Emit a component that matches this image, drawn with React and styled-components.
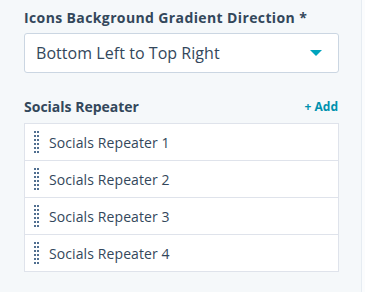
import React from 'react';
import styled, { createGlobalStyle } from 'styled-components';

const Global = createGlobalStyle`
  body {
    margin: 0;
    background: #fbfcfd;
    font-family: "Open Sans", "Noto Sans", sans-serif;
    color: #33475b;
  }
`;

const Panel = styled.div`
  height: 292px;
  padding: 8px 0 0 24px;
  box-sizing: border-box;
  width: 362px;
  background: #f5f8fa;
  border-right: 1px solid #e6ecf2;
`;

const Field = styled.div`
  width: 315px;
  display: flex;
  flex-direction: column;
`;

const Label = styled.div`
  font-size: 14px;
  line-height: 20px;
  font-weight: 700;
  letter-spacing: 0.38px;
  margin-bottom: 5px;
`;

const Select = styled.div`
  height: 40px;
  box-sizing: border-box;
  border: 1px solid #cbd6e2;
  border-radius: 3px;
  background: #fff;
  display: flex;
  align-items: center;
  justify-content: space-between;
  padding: 0 16px 0 11px;
  font-size: 16px;
  letter-spacing: 0.05px;
`;

const Caret = styled.span`
  width: 0;
  height: 0;
  border-left: 6px solid transparent;
  border-right: 6px solid transparent;
  border-top: 6px solid #00a4bd;
`;

const Header = styled.div`
  display: flex;
  justify-content: space-between;
  align-items: center;
  margin-top: 24px;
  margin-bottom: 6px;
  line-height: 20px;
`;

const Title = styled.span`
  font-size: 14px;
  font-weight: 700;
`;

const AddLink = styled.a`
  font-size: 12px;
  font-weight: 700;
  color: #0091ae;
  text-decoration: none;
  margin-right: 1px;
`;

const List = styled.div`
  border: 1px solid #dfe3eb;
  background: #fff;
`;

const Row = styled.div`
  height: 36px;
  display: flex;
  align-items: center;
  padding-left: 9px;
  font-size: 14px;
  letter-spacing: 0.1px;
  border-top: ${p => (p.first ? 'none' : '1px solid #dfe3eb')};
`;

const Handle = styled.span`
  display: grid;
  grid-template-columns: 2px 2px;
  grid-auto-rows: 2px;
  column-gap: 1px;
  row-gap: 2px;
  margin-right: 10px;
  & > i {
    background: #516f90;
  }
`;

const items = ['Socials Repeater 1', 'Socials Repeater 2', 'Socials Repeater 3', 'Socials Repeater 4'];

export default function App() {
  return (
    <>
      <Global />
      <Panel>
        <Field>
          <Label>Icons Background Gradient Direction *</Label>
          <Select>
            Bottom Left to Top Right
            <Caret />
          </Select>
          <Header>
            <Title>Socials Repeater</Title>
            <AddLink href="#">+ Add</AddLink>
          </Header>
          <List>
            {items.map((t, i) => (
              <Row key={t} first={i === 0}>
                <Handle>
                  {Array.from({ length: 12 }).map((_, k) => <i key={k} />)}
                </Handle>
                {t}
              </Row>
            ))}
          </List>
        </Field>
      </Panel>
    </>
  );
}
